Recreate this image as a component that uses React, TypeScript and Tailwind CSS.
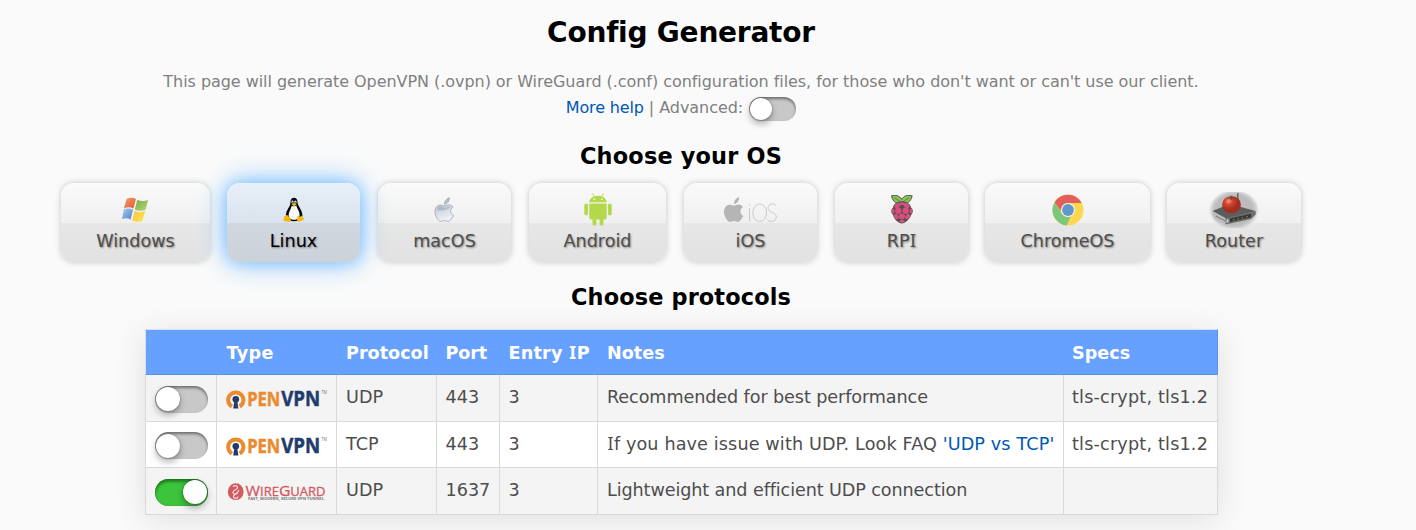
import React, { useState } from "react";

type SwitchProps = { on: boolean; onToggle: () => void; small?: boolean; label: string };

function Switch({ on, onToggle, small = false, label }: SwitchProps) {
  const size = small ? "h-6 w-[47px]" : "h-[27px] w-[53px]";
  const knob = small ? "size-[22px]" : "size-6";
  const color = on
    ? "bg-[#3dc43d] justify-end shadow-[inset_0_3px_3px_rgba(0,60,0,.5),inset_0_0_1px_rgba(0,80,0,.9)]"
    : "bg-[#c8c8c8] justify-start shadow-[inset_0_2px_3px_rgba(0,0,0,.45)]";
  return (
    <button
      type="button"
      role="switch"
      aria-checked={on}
      aria-label={label}
      onClick={onToggle}
      className={`flex shrink-0 items-center rounded-full px-px ${size} ${color}`}
    >
      <span className={`rounded-full bg-white shadow-[0_4px_7px_rgba(0,0,0,.3),0_0_2px_rgba(0,0,0,.45)] ${knob}`} />
    </button>
  );
}

function Label({ text }: { text: string }) {
  return (
    <>
      {text.split(/(I)/).map((part, i) =>
        part === "I" ? <span key={i} className="mx-[0.4px] font-['Noto_Sans',sans-serif] leading-none">I</span> : part
      )}
    </>
  );
}

const APPLE =
  "M20.7 20.8c-.8 2-2.9 5.2-5 5.2-1.500 0-2-.9-3.700-.9s-2.300.9-3.700.9C5.400 26 2 20.500 2 15.700c0-4.500 2.900-6.900 5.700-6.900 1.600 0 3 .9 4.100.9 1 0 2.800-1.100 4.800-1.100 1.600 0 3.200.8 4.300 2.300-3.700 2.200-3 7.800.9 9.200zM12 8c-.1-3.200 2.300-6.200 5.100-6.700C17.500 4.600 14.800 7.900 12 8z";

const icons = {
  windows: (
    <svg width="28" height="26" viewBox="0.700 0.500 28 26">
      <defs>
        <linearGradient id="wr" x2="1" y2="1"><stop stopColor="#f3a173" /><stop offset="1" stopColor="#df552e" /></linearGradient>
        <linearGradient id="wg" x2="1" y2="1"><stop stopColor="#79ae47" /><stop offset="1" stopColor="#b2d570" /></linearGradient>
        <linearGradient id="wb" x2="1" y2="1"><stop stopColor="#a8cdf0" /><stop offset="1" stopColor="#527fc9" /></linearGradient>
        <linearGradient id="wy" x2="1" y2="1"><stop stopColor="#f5c84a" /><stop offset="1" stopColor="#ffe24a" /></linearGradient>
      </defs>
      <path d="M5.300 2.600C8 .8 11.500.700 14.700 2.400L12 12C9 10.300 5.800 10.400 2.600 11.900z" fill="url(#wr)" />
      <path d="M16 3.200c3.200 1.700 7 1.900 10.800.3L24.200 13.200c-3.400 1.500-7.300 1.400-10.700-.3z" fill="url(#wg)" />
      <path d="M2.400 13.200c3-1.500 6.300-1.500 9.400 0L9.200 23C6.400 21.300 3.400 21.600.7 22.800z" fill="url(#wb)" />
      <path d="M13.400 14.200c3.300 1.700 6.700 2 10.400.3l-2.600 9.700c-3.300 1.600-7.200 1.600-10.500-.2z" fill="url(#wy)" />
    </svg>
  ),
  linux: (
    <svg width="22" height="26" viewBox="0 0 22 26">
      <path d="M7.500 4.500C7.500 2 9 .7 11 .7S14.500 2.200 14.500 5c0 4.300 4.900 7.300 4.900 13.600 0 3-2.200 5.700-8.400 5.700S2.900 22.300 2.900 18.600C2.900 12.500 7.800 10 7.500 4.500z" fill="#080808" />
      <path d="M8.700 8.700c1 .9 3.500.8 4.600-.1.800 3.300 3.500 6.300 3.300 9.400-.2 3.300-2.500 4.800-5.700 4.800s-5.300-1.700-5.300-4.800c0-3.400 2.500-5.900 3.100-9.300z" fill="#f8f8f8" />
      <ellipse cx="9.500" cy="5" rx="1.100" ry="1.400" fill="#eee" /><ellipse cx="12.400" cy="5" rx="1.200" ry="1.500" fill="#eee" />
      <circle cx="9.800" cy="5.200" r=".5" /><circle cx="12.200" cy="5.200" r=".5" />
      <path d="M8.300 7.300 11 6.100l2.900 1.100L11 9.300z" fill="#f1bd0b" />
      <path d="M2.300 18.500c1.200-1.100 2.300-.5 3.300 1l2.300 3.200c.5 1.400-1 2.500-3 2L.9 24c-1-.5 0-2 0-3.100s.4-1.800 1.400-2.400zM15 18.600c.4 1.500 2.500 1.400 3.500-.1.700 1.500 1.100 2 2.500 3.100.8.600-.5 1.400-1.700 2-2.500 1.400-4.600 1.700-5.100-.3-.4-1.700 0-3.400.8-4.700z" fill="#f5b90c" />
    </svg>
  ),
  mac: (
    <svg width="21" height="27" viewBox="1 0 22 27">
      <defs><linearGradient id="ma" x2=".3" y2="1"><stop stopColor="#9ba3b3" /><stop offset=".5" stopColor="#ced3de" /><stop offset="1" stopColor="#eef0f4" /></linearGradient></defs>
      <path d={APPLE} fill="url(#ma)" stroke="#a5abb9" strokeWidth=".9" />
      <path d="M4 14c1-4 4-4 6-3 3 1.200 5-.7 8 0-2 3-9 5-14 3z" fill="#8e98ac" opacity=".45" />
    </svg>
  ),
  android: (
    <svg width="28" height="33" viewBox="0 0 28 33" fill="#b3d84c">
      <path d="M5.300 9.300C5.400 5.600 8.700 2.700 14 2.700s8.500 2.900 8.700 6.600z" />
      <path d="m8.500.8 2 3M19.500.8l-2 3" stroke="#b3d84c" strokeWidth=".9" strokeLinecap="round" />
      <circle cx="10.200" cy="6.300" r=".8" fill="#fff" /><circle cx="17.800" cy="6.300" r=".8" fill="#fff" />
      <path d="M5.300 10.500h17.400v14a2 2 0 0 1-2 2H7.300a2 2 0 0 1-2-2z" />
      <rect x=".3" y="10.500" width="3.800" height="12" rx="1.900" /><rect x="23.900" y="10.500" width="3.800" height="12" rx="1.900" />
      <rect x="8.500" y="22" width="3.900" height="10.600" rx="1.900" /><rect x="15.600" y="22" width="3.900" height="10.600" rx="1.900" />
    </svg>
  ),
  ios: (
    <svg width="54" height="27" viewBox="0 0 54 27">
      <path d={APPLE} transform="translate(-2 0)" fill="#b5b5b5" />
      <g fill="none" stroke="#cacaca" strokeWidth="1">
        <path d="M25.500 12v13.500M25.500 7.800v1.700" />
        <ellipse cx="35.700" cy="16.700" rx="6.900" ry="8.800" />
        <path d="M52 9.500c-1.500-1.500-3.300-1.800-4.700-1.500-4 .8-4.500 6-.7 7.800l3 1.400c4.300 2 3.200 7.600-1.200 8.200-1.800.2-3.500-.3-4.900-1.600" />
      </g>
    </svg>
  ),
  rpi: (
    <svg width="24" height="29" viewBox="0 0 24 29">
      <path d="M11.700 7.500C8 9.500 3 8 1.500.8 5-.2 10 .5 11.700 4.500 13.500.5 18-.2 22.200.8 20.500 8 15.500 9.500 11.700 7.500z" fill="#8ac255" stroke="#4f564b" strokeWidth="1" />
      <path d="m4.500 2.800 6 4M19 2.800l-6 4" stroke="#4c6939" strokeWidth=".7" />
      <path d="M12 6.300c4 0 8.300 2.300 9 6.100 2.600 2 2 5.800.2 7.300C20.200 24 15 28.300 12 28.500 8.500 28 3.800 24.500 3 19.700c-2.400-2-2.200-5.500.1-7.300C3.600 8.500 8 6.300 12 6.300z" fill="#505054" />
      <g fill="#d84f7b">
        <ellipse cx="7.500" cy="10.600" rx="3.300" ry="2.300" transform="rotate(-35 7.500 10.600)" /><ellipse cx="16.500" cy="10.600" rx="3.300" ry="2.300" transform="rotate(35 16.500 10.600)" />
        <ellipse cx="12" cy="8.700" rx="2.500" ry="1.400" />
        <circle cx="8.300" cy="15.800" r="3.200" /><circle cx="15.700" cy="15.800" r="3.200" />
        <ellipse cx="3" cy="16" rx="1.400" ry="2.800" /><ellipse cx="21" cy="16" rx="1.400" ry="2.800" />
        <circle cx="12" cy="21.500" r="3" /><ellipse cx="6.300" cy="21.500" rx="2.200" ry="2.800" transform="rotate(-30 6.300 21.500)" /><ellipse cx="17.700" cy="21.500" rx="2.200" ry="2.800" transform="rotate(30 17.700 21.500)" />
        <ellipse cx="12" cy="26.400" rx="2.700" ry="1.400" />
      </g>
    </svg>
  ),
  chrome: (
    <svg width="32" height="32" viewBox="0 0 32 32">
      <circle cx="16" cy="16" r="15.500" fill="#fdd84f" />
      <path d="M2.500 8.300A15.500 15.500 0 0 1 29.600 9H16a7 7 0 0 0-6.700 8.500z" fill="#e35f5b" />
      <path d="M2.500 8.300 9.900 19.500A7 7 0 0 0 18.500 22.500l-3.700 9A15.500 15.500 0 0 1 2.500 8.300z" fill="#7cc77b" />
      <circle cx="16" cy="16" r="7" fill="#f4f5f3" /><circle cx="16" cy="16" r="5.900" fill="#5f98cb" />
    </svg>
  ),
  router: (
    <svg width="50" height="36" viewBox="0 0 50 36">
      <defs>
        <radialGradient id="rh"><stop offset=".72" stopColor="#bcbcbc" /><stop offset=".86" stopColor="#d2d2d2" /><stop offset="1" stopColor="#ececec" stopOpacity="0" /></radialGradient>
        <radialGradient id="rt" cx=".35" cy=".3"><stop stopColor="#f69a83" /><stop offset=".4" stopColor="#d4452f" /><stop offset="1" stopColor="#a32d1e" /></radialGradient>
      </defs>
      <ellipse cx="25" cy="18" rx="26" ry="21" fill="url(#rh)" />
      <path d="M28.800 1v16" stroke="#444" strokeWidth="1.100" />
      <path d="m3.500 19 17-7 26.200 7-30.200 8z" fill="#5c5c5c" />
      <path d="m3.500 19 13 7v6.500L5.500 27l-2-5z" fill="#bbb" />
      <path d="m16.500 26 30.200-7v3.500L42 27l-25.500 5.500z" fill="#6c6c6c" />
      <path d="m21 26.500 21-4.700v3.500l-21 4.800z" fill="#353735" />
      <path d="m24 28 16-3.700" stroke="#a1a24c" strokeDasharray="1.500 3" />
      <path d="m7 24 9 4.700" stroke="#777" /><path d="m17.500 27.500 2-.5v3.500l-2 .5z" fill="#ccc" />
      <ellipse cx="22.500" cy="12.700" rx="9.400" ry="8.600" fill="url(#rt)" />
      <path d="m18 6.500 4-1.500-.5-2 2 2 4 1-4 .3-1 2-1.500-2z" fill="#575b32" />
    </svg>
  ),
};

const systems = [
  { name: "Windows", width: "w-[149px]", icon: icons.windows },
  { name: "Linux", width: "w-[133px] mr-px", icon: icons.linux },
  { name: "macOS", width: "w-[133px] mr-px", icon: icons.mac },
  { name: "Android", width: "w-[137px] mr-px", icon: icons.android },
  { name: "iOS", width: "w-[133px] mr-px", icon: icons.ios },
  { name: "RPI", width: "w-[133px]", icon: icons.rpi },
  { name: "ChromeOS", width: "w-[165px]", icon: icons.chrome },
  { name: "Router", width: "w-[134px]", icon: icons.router },
];

function OpenVpn() {
  return (
    <svg width="102" height="30" viewBox="0 -4 102 30" className="block" fontFamily="'Open Sans', sans-serif" fontWeight="700">
      <path d="M5.900 17.500A7.600 7.600 0 1 1 13.700 17.500" fill="none" stroke="#ea8a31" strokeWidth="4" />
      <circle cx="9.800" cy="10.200" r="3.300" fill="#1f3c6d" /><path d="M8.500 11h2.600l1.300 8.500H7.200z" fill="#1f3c6d" />
      <text x="21.200" y="16.800" fontSize="19" fill="#ea8a31" stroke="#ea8a31" strokeWidth=".5" textLength="33" lengthAdjust="spacingAndGlyphs">PEN</text>
      <text x="55.200" y="16.800" fontSize="21.200" fill="#1f3c6d" stroke="#1f3c6d" strokeWidth=".5" textLength="39" lengthAdjust="spacingAndGlyphs">VPN</text>
      <text x="95.500" y="4.500" fontSize="4.500" fontWeight="400" fill="#66758e" textLength="5.500" lengthAdjust="spacingAndGlyphs">TM</text>
    </svg>
  );
}

function WireGuard() {
  return (
    <svg width="102" height="30" viewBox="0 -4 102 30" className="block" fontFamily="'Open Sans', sans-serif">
      <ellipse cx="9.700" cy="9.700" rx="7.900" ry="8.400" fill="#d4595f" />
      <path d="M7 4.500c2-2 5-.5 4.500 1.500-.4 2-4.500 1.500-4.500 4.500 0 2.500 4.500 2 4.500-.5M12.500 8c1 3-4.500 3.500-5 6.500-.2 2.500 4 2.500 4.500.2" fill="none" stroke="#f7e5e5" strokeWidth="1.200" />
      <text x="19.500" y="14" fontSize="14.500" fill="#d4595f" stroke="#d4595f" strokeWidth=".3" textLength="80" lengthAdjust="spacingAndGlyphs">W<tspan fontSize="12">IRE</tspan>G<tspan fontSize="12">UARD</tspan></text>
      <text x="22" y="18.300" fontSize="3.300" fontWeight="700" fill="#777" textLength="76" lengthAdjust="spacingAndGlyphs">FAST, MODERN, SECURE VPN TUNNEL</text>
    </svg>
  );
}

const protocols = [
  { wire: false, protocol: "UDP", port: "443", specs: "tls-crypt, tls1.2", row: "h-[47px] bg-[#f4f4f4]", note: "Recommended for best performance", link: "", tracking: "tracking-[-0.09px]" },
  { wire: false, protocol: "TCP", port: "443", specs: "tls-crypt, tls1.2", row: "h-[46px] bg-white", note: "If you have issue with UDP. Look FAQ ", link: "'UDP vs TCP'", tracking: "tracking-[0.13px]" },
  { wire: true, protocol: "UDP", port: "1637", specs: "", row: "h-[47px] bg-[#f4f4f4]", note: "Lightweight and efficient UDP connection", link: "", tracking: "tracking-[-0.1px]" },
];

const headings = [
  { text: "", width: "w-[72px] pl-[9px]" },
  { text: "Type", width: "w-[120px] pl-[9.5px] tracking-[0.3px]" },
  { text: "Protocol", width: "w-[100px] pl-[9px]" },
  { text: "Port", width: "w-[63px] pl-[8.5px] tracking-[-0.1px]" },
  { text: "Entry IP", width: "w-[98px] pl-[8.5px] tracking-[0.2px]" },
  { text: "Notes", width: "w-[466px] pl-[9px]" },
  { text: "Specs", width: "w-[154px] pl-2" },
];

const cell = "border-r border-b border-[#d9d9d9] p-0 pb-px align-middle whitespace-nowrap";

export default function App() {
  const [advanced, setAdvanced] = useState(false);
  const [os, setOs] = useState("Linux");
  const [enabled, setEnabled] = useState([false, false, true]);

  return (
    <main className="h-[530px] w-[1416px] overflow-hidden bg-[#fafafa] font-['Verdana','DejaVu_Sans',sans-serif] text-[#4d4d4d]">
      <header className="flex w-[1362px] flex-col items-center pt-[13px]">
        <h1 className="h-10 text-[28px] leading-10 font-bold tracking-[-0.22px] text-black">Config Generator</h1>
        <p className="mt-4 h-[26px] text-[16px] leading-[26px] tracking-[-0.05px] whitespace-nowrap text-[#808080]">
          This page will generate OpenVPN (.ovpn) or WireGuard (.conf) configuration files, for those who don't want or can't use our client.
        </p>
        <div className="flex h-[29px] items-start text-[16px] leading-[26px] tracking-[-0.05px] whitespace-pre text-[#808080]">
          <a href="#" className="tracking-[-0.15px] text-[#0057b7]">More help</a>
          <span> | Advanced: </span>
          <span className="ml-px mt-[2px]"><Switch small label="Advanced" on={advanced} onToggle={() => setAdvanced(!advanced)} /></span>
        </div>
        <h2 className="mt-4 h-8 text-[22.4px] leading-8 font-bold tracking-[0.19px] text-black">Choose your OS</h2>
      </header>

      <nav className="mt-[11px] flex gap-[17px] pl-[61px]">
        {systems.map((s) => (
          <button
            key={s.name}
            type="button"
            onClick={() => setOs(s.name)}
            className={`flex h-[79px] shrink-0 flex-col items-center rounded-[13px] text-[17.6px] [text-shadow:1px_1px_2px_rgba(0,0,0,.4)] ${s.width} ${
              os === s.name
                ? "z-10 bg-[linear-gradient(#e8f0f9_0,#dae2ed_50%,#d0d7df_50%,#cbd2d9_100%)] text-black shadow-[0_0_30px_#80c0ff,0_0_14px_#9ccfff]"
                : "bg-[linear-gradient(#fafafa_0,#f0f0f0_50%,#e7e7e7_50%,#e2e2e2_100%)] text-[#4d4d4d] shadow-[0_0_6px_rgba(0,0,0,.22)]"
            }`}
          >
            <span className="flex h-[53px] w-full items-center justify-center">{s.icon}</span>
            <span className="-mt-1 leading-[18px]"><Label text={s.name} /></span>
          </button>
        ))}
      </nav>

      <h2 className="mt-[19px] h-8 w-[1362px] text-center text-[22.4px] leading-8 font-bold tracking-[0.15px] text-black">Choose protocols</h2>

      <table className="mt-4 ml-[145px] w-[1073px] table-fixed border-separate border-spacing-0 text-left text-[17.6px] shadow-[0_5px_30px_rgba(0,0,0,.11)]">
        <thead>
          <tr className="h-[46px] bg-[#66a1ff] text-white">
            {headings.map((h) => (
              <th key={h.text} className={`border-t border-b border-t-[#d9e0ea] border-b-[#5b91e6] pt-0.5 pr-0 pb-0 font-bold first:border-l first:border-l-[#d9e0ea] last:border-r last:border-r-[#5b91e6] ${h.width}`}><Label text={h.text} /></th>
            ))}
          </tr>
        </thead>
        <tbody>
          {protocols.map((p, i) => (
            <tr key={i} className={p.row}>
              <td className="border-r border-b border-l border-[#d9d9d9] p-0 pt-0.5 pl-[9px] align-middle">
                <Switch
                  label={`${p.wire ? "WireGuard" : "OpenVPN"} ${p.protocol}`}
                  on={enabled[i]}
                  onToggle={() => setEnabled(enabled.map((v, n) => (n === i ? !v : v)))}
                />
              </td>
              <td className="border-r border-b border-[#d9d9d9] p-0 pt-1 pl-[9px] align-middle">{p.wire ? <WireGuard /> : <OpenVpn />}</td>
              <td className={`${cell} pl-[9px]`}>{p.protocol}</td>
              <td className={`${cell} pl-[8.5px]`}>{p.port}</td>
              <td className={`${cell} pl-[8.5px]`}>3</td>
              <td className={`${cell} pl-[9px] ${p.tracking}`}><Label text={p.note} />{p.link && <a href="#" className="text-[#0057b7]">{p.link}</a>}</td>
              <td className={`${cell} pl-2 tracking-[0.19px]`}>{p.specs}</td>
            </tr>
          ))}
        </tbody>
      </table>
    </main>
  );
}
